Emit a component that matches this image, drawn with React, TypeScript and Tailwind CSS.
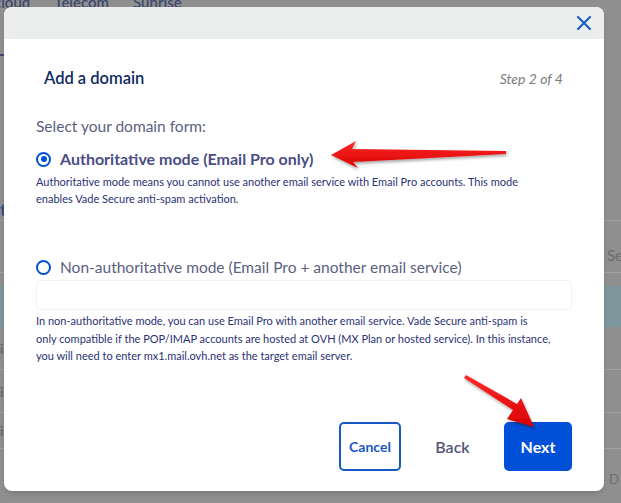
import React from "react"

const font = { fontFamily: "Lato, 'Open Sans', sans-serif" }

function Backdrop() {
  return (
    <div className="flex h-full w-full flex-col bg-[#8f8f8f] text-[#2f3f63]">
      <div className="-mt-[8px] flex h-[20px] gap-[24px] text-[15px] font-semibold leading-[20px] text-[#3b4a6e]">
        <span className="-ml-[6px]">cloud</span>
        <span>Telecom</span>
        <span>Sunrise</span>
      </div>
      <div className="mt-[42px] h-[2px] w-[6px] bg-[#3b4a6e]" />
      <div className="mt-[144px] h-[20px] text-[17px] font-bold leading-[20px] text-[#2d4e8a]">t</div>
      <div className="mt-[0px] border-t border-[#9aa3a5]" />
      <div className="mt-[18px] flex h-[34px] justify-end border-b border-[#9aa3a5]">
        <div className="flex w-[18px] items-center border-l border-[#9aa3a5] pl-[3px] text-[15px] text-[#6d6d6d]">
          Se
        </div>
      </div>
      <div className="mt-[13px] h-[41px] bg-[#7d979c]" />
      <div className="flex h-[43px] items-center border-b border-[#9aa3a5] text-[14px] text-[#5a5a66]">i</div>
      <div className="flex h-[43px] items-center border-b border-[#9aa3a5] text-[14px] text-[#5a5a66]">i</div>
      <div className="flex h-[36px] items-center border-b border-[#9aa3a5] text-[14px] text-[#5a5a66]">i</div>
      <div className="flex h-[40px] items-end justify-end pr-[2px] text-[13px] text-[#6d6d6d]">
        <span>D</span>
      </div>
    </div>
  )
}

function Radio({ checked }: { checked?: boolean }) {
  return (
    <span className="flex h-[15px] w-[15px] shrink-0 items-center justify-center rounded-full border-[2.5px] border-[#0050d7]">
      {checked && <span className="h-[6px] w-[6px] rounded-full bg-[#0050d7]" />}
    </span>
  )
}

function Arrows() {
  return (
    <svg className="pointer-events-none absolute left-0 top-0" width="621" height="503" viewBox="0 0 621 503">
      <defs>
        <filter id="sh" x="-20%" y="-50%" width="140%" height="200%">
          <feDropShadow dx="1" dy="2" stdDeviation="1.5" floodColor="#000" floodOpacity="0.35" />
        </filter>
        <linearGradient id="g1" x1="0" y1="0" x2="0" y2="1">
          <stop offset="0" stopColor="#ff2a2a" />
          <stop offset="1" stopColor="#d80000" />
        </linearGradient>
      </defs>
      <polygon
        filter="url(#sh)"
        fill="url(#g1)"
        points="331,155 356,141 352,149 506,151 506,154 353,162 358,168"
      />
      <polygon
        filter="url(#sh)"
        fill="url(#g1)"
        points="466,375 517,404 521,398 534,427 507,419 513,410 464,378"
      />
    </svg>
  )
}

export default function App() {
  return (
    <div className="relative h-[503px] w-[621px] overflow-hidden" style={font}>
      <Backdrop />

      <div className="absolute left-[4px] top-[7px] flex h-[484px] w-[600px] flex-col rounded-lg bg-white shadow-md">
        {/* header */}
        <div className="flex h-[32px] items-center justify-end rounded-t-lg bg-[#eceeed] pr-[12px]">
          <svg width="16" height="16" viewBox="0 0 16 16" className="text-[#1a5ec6]">
            <path d="M2 2 L14 14 M14 2 L2 14" stroke="currentColor" strokeWidth="2.2" strokeLinecap="round" />
          </svg>
        </div>

        <div className="flex flex-1 flex-col px-[32px] pb-[20px]">
          <div className="mt-[27px] flex items-baseline justify-between pl-[8px] pr-[9px]">
            <h2 className="text-[16.5px] font-semibold leading-[24px] text-[#0f2a62]">Add a domain</h2>
            <span className="text-[14px] italic text-[#7a7a7a]">Step 2 of 4</span>
          </div>

          <p className="mt-[26px] text-[15.5px] leading-[20px] text-[#5c6080]">Select your domain form:</p>

          <label className="mt-[13px] flex items-center gap-[9px]">
            <Radio checked />
            <span className="text-[16px] font-bold leading-[20px] text-[#4a4d84]">Authoritative mode (Email Pro only)</span>
          </label>
          <p className="mt-[4px] text-[11px] leading-[17px] text-[#2b3275]">
            Authoritative mode means you cannot use another email service with Email Pro accounts. This mode
            <br />
            enables Vade Secure anti-spam activation.
          </p>

          <label className="mt-[50px] flex items-center gap-[9px]">
            <Radio />
            <span className="text-[15.5px] leading-[20px] text-[#5b5f80]">
              Non-authoritative mode (Email Pro + another email service)
            </span>
          </label>
          <div className="mt-[3px] h-[30px] w-[536px] rounded-sm border border-[#eef4f4]" />
          <p className="mt-[2px] text-[11px] leading-[17.5px] text-[#2b3275]">
            In non-authoritative mode, you can use Email Pro with another email service. Vade Secure anti-spam is
            <br />
            only compatible if the POP/IMAP accounts are hosted at OVH (MX Plan or hosted service). In this instance,
            <br />
            you will need to enter mx1.mail.ovh.net as the target email server.
          </p>

          <div className="mt-auto flex justify-end">
            <button className="h-[49px] w-[62px] rounded-[5px] border-2 border-[#1758c5] text-[14px] font-bold text-[#1758c5]">
              Cancel
            </button>
            <button className="h-[49px] w-[103px] text-[16px] font-semibold text-[#545677]">Back</button>
            <button className="h-[49px] w-[68px] rounded-[5px] bg-[#0050d7] text-[16px] font-bold text-white">
              Next
            </button>
          </div>
        </div>
      </div>

      <Arrows />
    </div>
  )
}
